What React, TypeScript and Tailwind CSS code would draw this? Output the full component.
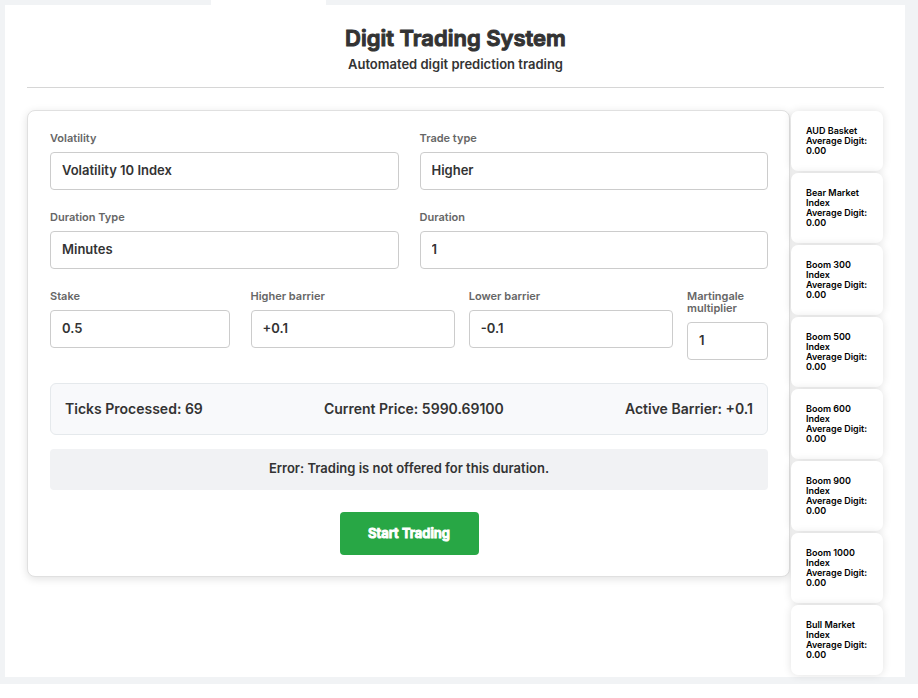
import { useState } from "react";
import type { ReactNode } from "react";

const control =
  "block h-[38px] w-full appearance-none rounded-[4px] border border-[#cccccc] bg-white px-[11px] text-[13px] font-semibold text-[#333333] outline-none";

const markets = [
  "AUD Basket",
  "Bear Market Index",
  "Boom 300 Index",
  "Boom 500 Index",
  "Boom 600 Index",
  "Boom 900 Index",
  "Boom 1000 Index",
  "Bull Market Index",
];

function Field({ id, label, children }: { id: string; label: string; children: ReactNode }) {
  return (
    <div className="flex flex-col">
      <label htmlFor={id} className="pb-2 text-[11px] leading-[12px] font-semibold text-[#666666]">
        {label}
      </label>
      {children}
    </div>
  );
}

function TextField({ id, label, initial }: { id: string; label: string; initial: string }) {
  const [value, setValue] = useState(initial);
  return (
    <Field id={id} label={label}>
      <input
        id={id}
        type="text"
        value={value}
        onChange={(e) => setValue(e.target.value)}
        className={`${control} pb-[3px]`}
      />
    </Field>
  );
}

function SelectField({ id, label, option }: { id: string; label: string; option: string }) {
  return (
    <Field id={id} label={label}>
      <select id={id} defaultValue={option} className={`${control} pb-[1px]`}>
        <option value={option}>{option}</option>
      </select>
    </Field>
  );
}

export default function App() {
  return (
    <div className="bg-[#f1f3f5] pr-[13px] pb-[7px] pl-[5px] font-['Inter',sans-serif] font-semibold text-[#333333]">
      <div className="flex h-[5px]">
        <div className="ml-[206px] w-[115px] bg-white" />
      </div>
      <main className="bg-white pt-5 pr-[21px] pb-[2px] pl-[22px]">
        <header className="border-b border-[#d6d6d6] pb-[14px] text-center">
          <h1 className="text-[22px] leading-[27px] font-semibold [-webkit-text-stroke:1px_currentColor]">
            Digit Trading System
          </h1>
          <p className="mt-[3px] text-[13px] leading-[18px]">Automated digit prediction trading</p>
        </header>

        <div className="mt-[22px] flex items-start gap-[1px]">
          <section className="flex-1 rounded-[8px] border border-[#e0e0e0] bg-white py-[21px] pr-[21px] pl-[22px] shadow-[0_2px_8px_rgba(0,0,0,0.12)]">
            <div className="grid grid-cols-2 gap-[21px]">
              <SelectField id="volatility" label="Volatility" option="Volatility 10 Index" />
              <SelectField id="trade-type" label="Trade type" option="Higher" />
              <SelectField id="duration-type" label="Duration Type" option="Minutes" />
              <TextField id="duration" label="Duration" initial="1" />
            </div>

            <div className="mt-[21px] flex items-start gap-[21px]">
              <div className="w-1/4">
                <TextField id="stake" label="Stake" initial="0.5" />
              </div>
              <div className="flex flex-1 items-start gap-[14px]">
                <div className="min-w-0 flex-1">
                  <TextField id="higher" label="Higher barrier" initial="+0.1" />
                </div>
                <div className="min-w-0 flex-1">
                  <TextField id="lower" label="Lower barrier" initial="-0.1" />
                </div>
                <div className="w-[81px]">
                  <TextField id="martingale" label="Martingale multiplier" initial="1" />
                </div>
              </div>
            </div>

            <div className="mt-[23px] flex justify-between rounded-[6px] border border-[#e5e9ec] bg-[#f8f9fb] px-[14px] py-[15px] text-[14px] leading-5">
              <span>Ticks Processed: 69</span>
              <span>Current Price: 5990.69100</span>
              <span>Active Barrier: +0.1</span>
            </div>

            <div className="mt-[14px] rounded-[4px] bg-[#f1f2f4] pt-[9px] pb-3 text-center text-[13px] leading-5">
              Error: Trading is not offered for this duration.
            </div>

            <div className="mt-[22px] flex justify-center">
              <button
                type="button"
                className="h-[43px] w-[139px] rounded-[4px] bg-[#28a745] text-[13px] font-semibold text-white [-webkit-text-stroke:1px_currentColor]"
              >
                Start Trading
              </button>
            </div>
          </section>

          <aside className="flex w-[93px] flex-col gap-[2px] pt-[1px] pr-[1px]">
            {markets.map((name) => (
              <div
                key={name}
                className="rounded-[7px] bg-white py-[15px] pr-[14px] pl-[15px] text-[9px] leading-[10px] text-black shadow-[0_0_8px_rgba(0,0,0,0.12)]"
              >
                <div>{name}</div>
                <div>Average Digit: 0.00</div>
              </div>
            ))}
          </aside>
        </div>
      </main>
    </div>
  );
}
